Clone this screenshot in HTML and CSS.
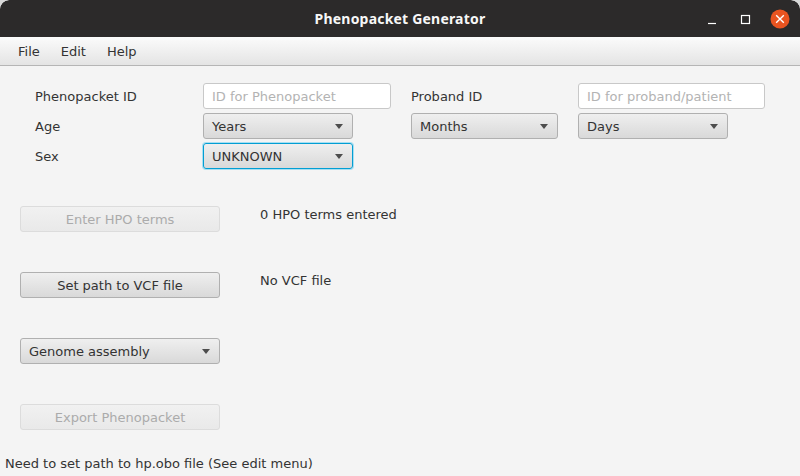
FILE: index.html
```html
<!DOCTYPE html>
<html lang="en">
<head>
  <meta charset="UTF-8">
  <title>Phenopacket Generator</title>
  <link rel="stylesheet" href="styles.css">
</head>

<body>

<header class="titlebar">
  <h1>Phenopacket Generator</h1>
  <div class="window-btns">
    <svg class="win-icon" width="16" height="16" viewBox="0 0 16 16"><path d="M4 12.5h8" stroke="#fff" stroke-width="1.2" fill="none"/></svg>
    <svg class="win-icon" width="16" height="16" viewBox="0 0 16 16"><rect x="4.5" y="4.5" width="8" height="8" stroke="#fff" stroke-width="1.2" fill="none"/></svg>
    <svg class="win-icon" width="20" height="20" viewBox="0 0 20 20"><circle cx="10" cy="10" r="9.5" fill="#e95420"/><path d="M6.2 6.2l7.6 7.6M13.8 6.2l-7.6 7.6" stroke="#fff" stroke-width="1.4" fill="none"/></svg>
  </div>
</header>

<nav class="menubar">
  <a>File</a>
  <a>Edit</a>
  <a>Help</a>
</nav>

<div class="main-content">
  <div class="form-grid">
    <label>Phenopacket ID</label>
    <div class="text-input wide">ID for Phenopacket</div>
    <label class="second">Proband ID</label>
    <div class="text-input wide-alt">ID for proband/patient</div>

    <label>Age</label>
    <div class="combo"><span>Years</span><i class="arrow"></i></div>
    <div class="combo months second"><span>Months</span><i class="arrow"></i></div>
    <div class="combo"><span>Days</span><i class="arrow"></i></div>

    <label>Sex</label>
    <div class="combo focused"><span>UNKNOWN</span><i class="arrow"></i></div>
  </div>

  <div class="action-grid">
    <div class="btn disabled"><span>Enter HPO terms</span></div>
    <div class="note">0 HPO terms entered</div>

    <div class="btn"><span>Set path to VCF file</span></div>
    <div class="note">No VCF file</div>

    <div class="combo full"><span>Genome assembly</span><i class="arrow"></i></div>
    <div></div>

    <div class="btn disabled"><span>Export Phenopacket</span></div>
  </div>

  <p class="status">Need to set path to hp.obo file (See edit menu)</p>
</div>

</body>
</html>
```

FILE: styles.css
```css
* {
  margin: 0;
  padding: 0;
  box-sizing: border-box;
}

html {
  background-color: #d8d8d8;
}

body {
  width: 800px;
  height: 476px;
  overflow: hidden;
  background-color: #f4f4f4;
  font-family: 'DejaVu Sans', sans-serif;
  font-size: 13px;
  line-height: 16px;
  color: #333;
  border-radius: 9px 9px 0 0;
}

.titlebar {
  height: 37px;
  background-color: #2c2a2a;
  border-radius: 9px 9px 0 0;
  display: flex;
  align-items: center;
  justify-content: center;
  position: relative;
}

.titlebar h1 {
  color: #f7f7f7;
  font-family: 'Noto Sans', sans-serif;
  font-size: 14px;
  font-weight: bold;
  letter-spacing: 0.2px;
}

.window-btns {
  position: absolute;
  top: 9px;
  right: 10px;
  display: flex;
  align-items: center;
  gap: 17px;
}

.menubar {
  height: 29px;
  display: flex;
  align-items: center;
  gap: 21px;
  padding: 2px 0 0 18px;
  background: linear-gradient(#fbfbfb, #e4e4e4);
  border-bottom: 1px solid #b5b5b5;
}

.main-content {
  padding-top: 17px;
}

.form-grid {
  display: grid;
  grid-template-columns: 168px 188px 187px 187px;
  grid-auto-rows: 26px;
  row-gap: 4px;
  margin-left: 35px;
  align-items: center;
}

.form-grid label {
  padding-top: 2px;
}

.second {
  margin-left: 20px;
}

.text-input {
  height: 26px;
  background-color: #fff;
  border: 1px solid #c8c8c8;
  border-radius: 3px;
  padding: 5px 8px 0;
  color: #b3b3b3;
}

.wide-alt {
  width: 187px;
}

.combo {
  width: 150px;
  height: 26px;
  display: flex;
  align-items: center;
  justify-content: space-between;
  padding: 0 9px 0 8px;
  background: linear-gradient(#efefef, #d9d9d9);
  border: 1px solid #b0b0b0;
  border-radius: 3px;
}

.combo span,
.btn span {
  padding-top: 2px;
}

.combo.months {
  width: 147px;
}

.combo.full {
  width: 200px;
}

.combo.focused {
  border: 1px solid #039ed3;
  box-shadow: 0 0 0 1px #a8dff2;
}

.arrow {
  width: 0;
  height: 0;
  border-left: 4.5px solid transparent;
  border-right: 4.5px solid transparent;
  border-top: 5px solid #4d4d4d;
}

.action-grid {
  display: grid;
  grid-template-columns: 200px 1fr;
  column-gap: 40px;
  grid-auto-rows: 26px;
  row-gap: 40px;
  margin: 37px 0 0 20px;
}

.btn {
  height: 26px;
  display: flex;
  align-items: center;
  justify-content: center;
  background: linear-gradient(#efefef, #d9d9d9);
  border: 1px solid #b0b0b0;
  border-radius: 3px;
}

.btn.disabled {
  background: linear-gradient(#f1f1f1, #e9e9e9);
  border-color: #dcdcdc;
  color: #ababab;
}

.note {
  padding-top: 1px;
}

.status {
  margin: 26px 0 0 5px;
}
```
